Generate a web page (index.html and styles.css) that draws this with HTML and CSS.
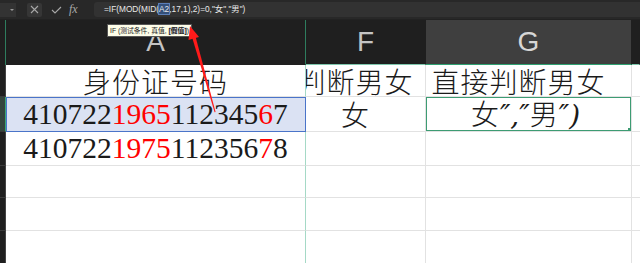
FILE: index.html
```html
<!DOCTYPE html>
<html lang="zh-CN">
<head>
    <meta charset="UTF-8">
    <meta name="viewport" content="width=device-width, initial-scale=1.0">
    <title>身份证号码判断男女</title>
    <link rel="stylesheet" href="styles.css">
</head>
<body>

    <div class="toolbar">
        <div class="namebox"><span class="caret"></span></div>
        <div class="tool-btn cancel">
            <svg width="9" height="9" viewBox="0 0 9 9"><path d="M1 1 L8 8 M8 1 L1 8" stroke="#a8a8a8" stroke-width="1.1" fill="none"/></svg>
        </div>
        <div class="tool-btn">
            <svg width="11" height="8" viewBox="0 0 11 8"><path d="M1 4 L4 7 L10 1" stroke="#a8a8a8" stroke-width="1.1" fill="none"/></svg>
        </div>
        <div class="fx">fx</div>
        <div class="formula">=IF(MOD(MID(<span class="ref">A2</span>,17,1),2)=0,"女","男")</div>
    </div>

    <div class="sheet">
        <!-- en-têtes de colonnes -->
        <div class="corner"></div>
        <div class="col-head">A</div>
        <div class="col-head">F</div>
        <div class="col-head selected">G</div>
        <div class="col-head rest"></div>

        <!-- ligne 1 -->
        <div class="row-head"></div>
        <div class="cell cjk">身份证号码</div>
        <div class="cell cjk shift">判断男女</div>
        <div class="cell cjk shift">直接判断男女</div>
        <div class="cell rest"></div>

        <!-- ligne 2 -->
        <div class="row-head active"></div>
        <div class="cell num ref-range">410722<span class="red">1965</span>112345<span class="red">6</span>7</div>
        <div class="cell cjk shift">女</div>
        <div class="cell cjk current"><span>女<span class="quote">″,″</span>男<span class="quote">″)</span></span></div>
        <div class="cell rest"></div>

        <!-- ligne 3 -->
        <div class="row-head"></div>
        <div class="cell num">410722<span class="red">1975</span>112356<span class="red">7</span>8</div>
        <div class="cell"></div>
        <div class="cell"></div>
        <div class="cell rest"></div>

        <div class="row-head"></div>
        <div class="cell"></div>
        <div class="cell"></div>
        <div class="cell"></div>
        <div class="cell rest"></div>

        <div class="row-head"></div>
        <div class="cell"></div>
        <div class="cell"></div>
        <div class="cell"></div>
        <div class="cell rest"></div>

        <div class="row-head"></div>
        <div class="cell"></div>
        <div class="cell"></div>
        <div class="cell"></div>
        <div class="cell rest"></div>
    </div>

    <div class="tooltip">IF (测试条件, 真值, <b>[假值]</b>)</div>

    <svg class="arrow" width="640" height="263" viewBox="0 0 640 263">
        <polygon points="190,26 199,37 188.5,40" fill="#ff1a1a"/>
        <polygon points="192.3,38 195.7,37.3 215.6,112 214.6,112.2" fill="#ff1a1a"/>
    </svg>

</body>
</html>
```

FILE: styles.css
```css
body {
    margin: 0;
    padding: 0;
    width: 640px;
    height: 263px;
    overflow: hidden;
    background-color: #1f1f1f;
    font-family: "Liberation Sans", "Noto Sans CJK SC", sans-serif;
}
.toolbar {
    display: flex;
    align-items: center;
    height: 20px;
    padding: 0;
    background-color: #282828;
    border-bottom: 1px solid #222;
    box-sizing: border-box;
}
.namebox {
    width: 16px;
    height: 14px;
    background-color: #333;
    position: relative;
}
.caret {
    position: absolute;
    right: 2px;
    top: 6px;
    border-left: 2px solid transparent;
    border-right: 2px solid transparent;
    border-top: 2px solid #999;
}
.tool-btn {
    width: 15px;
    height: 14px;
    margin-left: 11px;
    display: flex;
    align-items: center;
    justify-content: center;
}
.tool-btn.cancel {
    background-color: #363636;
    border-radius: 2px;
}
.tool-btn + .tool-btn {
    margin-left: 7px;
}
.fx {
    margin-left: 5px;
    width: 14px;
    font-family: "Liberation Serif", serif;
    font-style: italic;
    font-size: 12px;
    color: #a8a8a8;
}
.formula {
    flex: 1;
    margin-left: 11px;
    height: 15px;
    line-height: 15px;
    padding-left: 10px;
    background-color: #323232;
    border-radius: 3px 0 0 3px;
    color: #e8e8e8;
    font-size: 8.3px;
    font-family: "Liberation Sans", "Noto Sans CJK SC", sans-serif;
    white-space: nowrap;
}
.ref {
    background-color: #34507a;
    outline: 1px solid #5c7fb8;
}

.sheet {
    display: grid;
    grid-template-columns: 6px 300px 120px 206px 1fr;
    grid-template-rows: 45px 32px 35px 34px 32px 33px 33px;
}
.sheet > div {
    box-sizing: border-box;
}
.corner {
    background-color: #1f1f1f;
    border-right: 1px solid #2e7d5e;
}
.col-head {
    background-color: #1f1f1f;
    color: #c4c4c4;
    font-size: 28px;
    line-height: 1;
    display: flex;
    align-items: center;
    justify-content: center;
    border-right: 1px solid #1f1f1f;
    border-bottom: 1px solid #1f1f1f;
}
.col-head:nth-child(2) {
    border-right: 1px solid #2e7d5e;
}
.col-head:nth-child(3) {
    border-bottom: 1px solid #7fc7ad;
}
.col-head.selected {
    background-color: #3f3f3f;
    color: #d6d6d6;
    border-bottom: 1px solid #2fa172;
}
.col-head.rest {
    border-bottom: 1px solid #7fc7ad;
}
.row-head {
    background-color: #1f1f1f;
    border-right: 1px solid #444;
    border-bottom: 1px solid #3a3a3a;
}
.row-head.active {
    background-color: #34463c;
    border-right: 1px solid #3aa877;
}
.cell {
    background-color: #fff;
    border-right: 1px solid #e2e2e2;
    border-bottom: 1px solid #e2e2e2;
    display: flex;
    align-items: center;
    justify-content: center;
    overflow: hidden;
    white-space: nowrap;
    line-height: 1;
    color: #1a1a1a;
    position: relative;
}
.sheet > .cell:nth-child(5n+2) {
    border-right: 1px solid #a5d9c6;
}
.cell.rest {
    border-right: none;
}
.cjk {
    font-family: "Noto Sans CJK SC", sans-serif;
    font-weight: 300;
    font-size: 28px;
    letter-spacing: 1px;
}
.shift {
    padding-right: 20px;
}
.quote {
    font-family: "DejaVu Serif", serif;
    font-style: italic;
    font-weight: normal;
    letter-spacing: 0;
}
.num {
    font-family: "Liberation Serif", serif;
    font-size: 29.5px;
}
.red {
    color: #ff0000;
}
.ref-range {
    background-color: #dbe2f3;
    border-top: 1px solid #4a74c9;
    border-bottom: 1px solid #4a74c9;
    box-shadow: inset 1px 0 0 #4a74c9;
}
.sheet > .cell.ref-range {
    border-right: 1px solid #4a74c9;
}
.current {
    box-shadow: inset 0 0 0 1px #3d9c73;
    padding-right: 6px;
}
.current::after {
    content: "";
    position: absolute;
    right: -1px;
    bottom: -1px;
    width: 4px;
    height: 4px;
    background-color: #3d9c73;
}

.tooltip {
    position: absolute;
    left: 107px;
    top: 24px;
    height: 11px;
    line-height: 11px;
    padding: 0 2px;
    background-color: #fdfde8;
    border: 1px solid #555;
    color: #222;
    font-size: 6.8px;
    font-family: "Liberation Sans", "Noto Sans CJK SC", sans-serif;
    white-space: nowrap;
}
.tooltip b {
    background-color: #ddd;
}
.arrow {
    position: absolute;
    left: 0;
    top: 0;
    pointer-events: none;
}
```
